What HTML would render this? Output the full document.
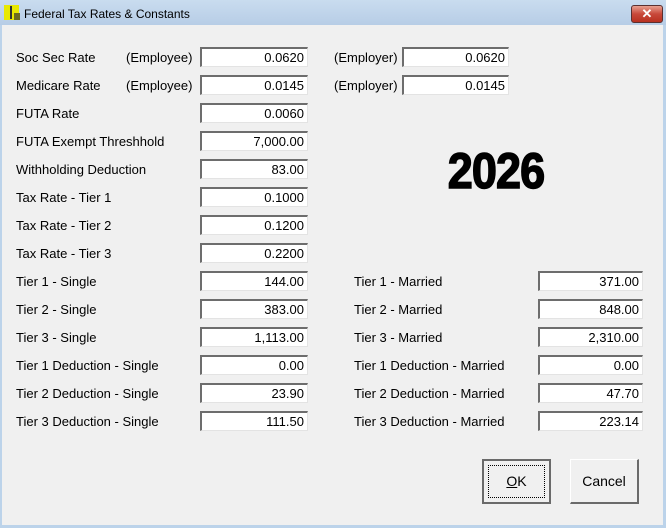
<!DOCTYPE html>
<html><head><style>
body{margin:0;width:666px;height:528px;background:#bcd3ea;position:relative;overflow:hidden;font-family:"Liberation Sans",sans-serif;}
.tb{position:absolute;left:0;top:0;width:666px;height:25px;background:linear-gradient(#c9dcef,#b7cde6);}
.client{position:absolute;left:2px;top:25px;width:661px;height:500px;background:#f0f0f0;}
.t{position:absolute;font-size:13px;color:#000;white-space:nowrap;line-height:16px;}
.b{position:absolute;height:17px;width:102px;background:#fff;border-top:2px solid #6d6d6d;border-left:2px solid #6d6d6d;border-right:1px solid #e3e3e3;border-bottom:1px solid #e3e3e3;font-size:13px;text-align:right;line-height:18px;padding-right:3px;box-sizing:content-box;}
.btn{position:absolute;width:69px;height:45px;background:#f0f0f0;border:1px solid #fff;border-right:2px solid #6a6a6a;border-bottom:2px solid #6a6a6a;font-size:14px;text-align:center;line-height:43px;box-sizing:border-box;}
</style></head><body>
<div class="tb"></div>
<div style="position:absolute;left:4px;top:5px;width:15px;height:15px;background:#e8e800;"></div>
<div style="position:absolute;left:14px;top:13px;width:6px;height:7px;background:#6b6b20;"></div>
<div style="position:absolute;left:10px;top:6px;width:2px;height:13px;background:#333;"></div>
<div class="t" style="left:24px;top:6px;font-size:12px;">Federal Tax Rates &amp; Constants</div>
<div style="position:absolute;left:631px;top:5px;width:30px;height:16px;border:1px solid #5a3030;border-radius:3px;background:linear-gradient(#e8a090,#c8483a 50%,#b83020);color:#fff;font-size:13px;font-weight:bold;text-align:center;line-height:16px;">✕</div>
<div class="client"></div>

<div class="t" style="left:16px;top:50px">Soc Sec Rate</div><div class="t" style="left:126px;top:50px">(Employee)</div>
<div class="b" style="left:200px;top:47px">0.0620</div>
<div class="t" style="left:334px;top:50px">(Employer)</div>
<div class="b" style="left:402px;top:47px;width:101px">0.0620</div>

<div class="t" style="left:16px;top:78px">Medicare Rate</div><div class="t" style="left:126px;top:78px">(Employee)</div>
<div class="b" style="left:200px;top:75px">0.0145</div>
<div class="t" style="left:334px;top:78px">(Employer)</div>
<div class="b" style="left:402px;top:75px;width:101px">0.0145</div>

<div class="t" style="left:16px;top:106px">FUTA Rate</div><div class="b" style="left:200px;top:103px">0.0060</div>
<div class="t" style="left:16px;top:134px">FUTA Exempt Threshhold</div><div class="b" style="left:200px;top:131px">7,000.00</div>
<div class="t" style="left:16px;top:162px">Withholding Deduction</div><div class="b" style="left:200px;top:159px">83.00</div>
<div class="t" style="left:16px;top:190px">Tax Rate - Tier 1</div><div class="b" style="left:200px;top:187px">0.1000</div>
<div class="t" style="left:16px;top:218px">Tax Rate - Tier 2</div><div class="b" style="left:200px;top:215px">0.1200</div>
<div class="t" style="left:16px;top:246px">Tax Rate - Tier 3</div><div class="b" style="left:200px;top:243px">0.2200</div>
<div class="t" style="left:16px;top:274px">Tier 1 - Single</div><div class="b" style="left:200px;top:271px">144.00</div>
<div class="t" style="left:16px;top:302px">Tier 2 - Single</div><div class="b" style="left:200px;top:299px">383.00</div>
<div class="t" style="left:16px;top:330px">Tier 3 - Single</div><div class="b" style="left:200px;top:327px">1,113.00</div>
<div class="t" style="left:16px;top:358px">Tier 1 Deduction - Single</div><div class="b" style="left:200px;top:355px">0.00</div>
<div class="t" style="left:16px;top:386px">Tier 2 Deduction - Single</div><div class="b" style="left:200px;top:383px">23.90</div>
<div class="t" style="left:16px;top:414px">Tier 3 Deduction - Single</div><div class="b" style="left:200px;top:411px">111.50</div>

<div class="t" style="left:354px;top:274px">Tier 1 - Married</div><div class="b" style="left:538px;top:271px;width:99px">371.00</div>
<div class="t" style="left:354px;top:302px">Tier 2 - Married</div><div class="b" style="left:538px;top:299px;width:99px">848.00</div>
<div class="t" style="left:354px;top:330px">Tier 3 - Married</div><div class="b" style="left:538px;top:327px;width:99px">2,310.00</div>
<div class="t" style="left:354px;top:358px">Tier 1 Deduction - Married</div><div class="b" style="left:538px;top:355px;width:99px">0.00</div>
<div class="t" style="left:354px;top:386px">Tier 2 Deduction - Married</div><div class="b" style="left:538px;top:383px;width:99px">47.70</div>
<div class="t" style="left:354px;top:414px">Tier 3 Deduction - Married</div><div class="b" style="left:538px;top:411px;width:99px">223.14</div>

<div style="position:absolute;left:436px;top:145px;width:120px;text-align:center;font-size:50px;font-weight:bold;line-height:52px;transform:scaleX(0.9);letter-spacing:-1px;-webkit-text-stroke:1.5px #000;">2026</div>

<div class="btn" style="left:482px;top:459px;border:2px solid #6a6a6a;"><div style="position:absolute;left:4px;top:4px;right:4px;bottom:4px;border:1px dotted #000;"></div><span style="position:relative;top:-1px"><u>O</u>K</span></div>
<div class="btn" style="left:570px;top:459px;">Cancel</div>
</body></html>
